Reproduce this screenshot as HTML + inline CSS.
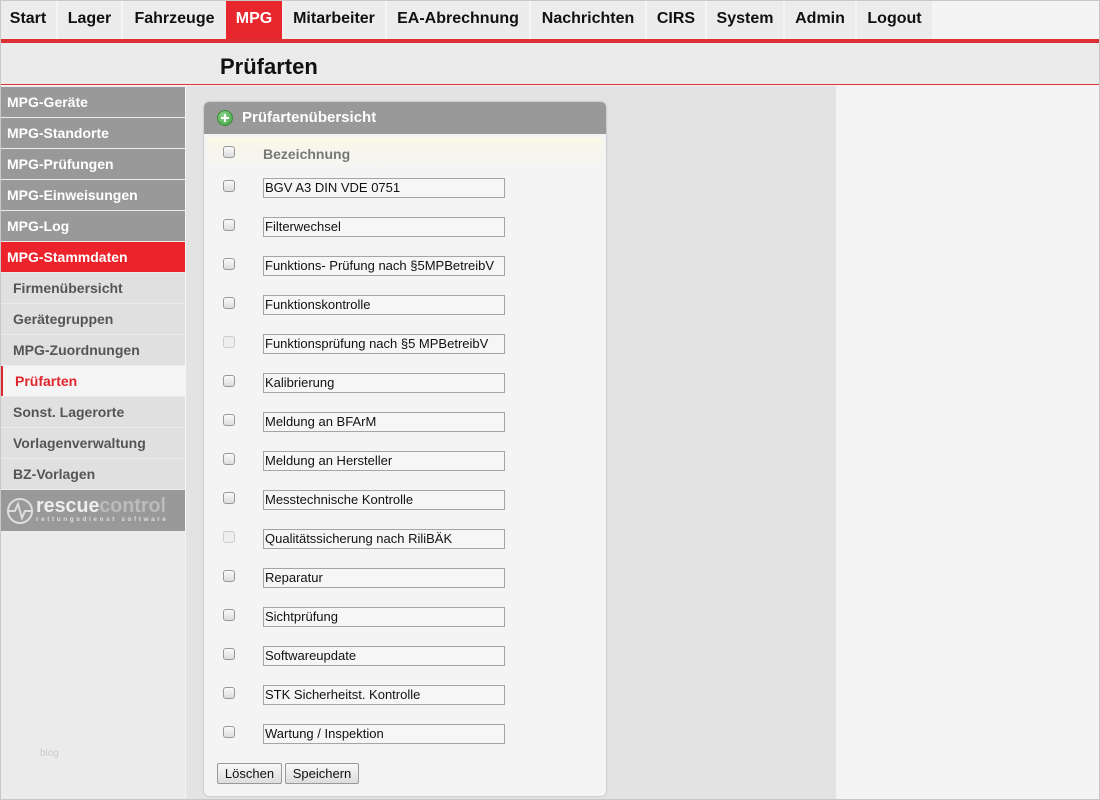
<!DOCTYPE html>
<html><head><meta charset="utf-8"><style>
*{box-sizing:border-box;margin:0;padding:0}
body{width:1100px;height:800px;position:relative;background:#f4f4f4;font-family:"Liberation Sans",Arial,sans-serif;overflow:hidden}
.frame{position:absolute;left:0;top:0;width:1100px;height:800px;border:1px solid #c8c8c8;pointer-events:none;z-index:10}
.nav{position:absolute;left:0;top:0;height:39px;width:1100px;background:#f4f4f4}
.nav a{position:absolute;top:0;height:39px;line-height:38px;background:#ececec;color:#111;font-weight:bold;font-size:16px;text-align:center;text-decoration:none}
.nav a.on{background:#e8262d;color:#fff}
.redbar{position:absolute;left:0;top:39px;width:1100px;height:4px;background:#dd3035}
.title{position:absolute;left:0;top:43px;width:1100px;height:42px;background:#ebebeb;border-bottom:1px solid #d9363b}
.title h1{position:absolute;left:220px;top:11px;font-size:22px;font-weight:bold;color:#111}
.side{position:absolute;left:0;top:86px;width:185px;height:714px;background:#ebebeb}
.si{position:absolute;left:0;width:185px;height:30px;line-height:30px;font-size:14px;font-weight:bold;padding-left:7px}
.g{background:#999;color:#fff}
.r{background:#ec232b;color:#fff}
.s{background:#e0e0e0;color:#555;padding-left:13px}
.a{background:#f5f5f5;color:#e0262d;padding-left:12px;border-left:3px solid #e0262d}
.content{position:absolute;left:186px;top:86px;width:650px;height:714px;background:#e3e3e3}
.panel{position:absolute;left:204px;top:102px;width:402px;height:694px;background:#f4f4f4;border-radius:5px;box-shadow:0 0 2px #aaa;overflow:hidden}
.ph{height:32px;background:#999;color:#fff;font-weight:bold;font-size:15px;line-height:32px;padding-left:38px;position:relative}
.plus{position:absolute;left:13px;top:8px;width:16px;height:16px;border-radius:50%;background:radial-gradient(circle at 40% 35%,#8fd98f,#3c9a3c);border:1px solid #3b8a3b}
.plus:before{content:"";position:absolute;left:3px;top:6px;width:8px;height:2px;background:#fff}
.plus:after{content:"";position:absolute;left:6px;top:3px;width:2px;height:8px;background:#fff}
.hr{position:absolute;left:3px;top:36px;width:396px;height:30px;background:linear-gradient(#faf8e6,#f4f4f4)}
.hr b{position:absolute;left:56px;top:8px;font-size:14px;color:#777}
.cb{position:absolute;left:19px;width:12px;height:12px;border:1px solid #999;border-radius:3px;background:linear-gradient(#fafafa,#ddd)}
.cb.d{border-color:#ccc;background:#eee}
.in{position:absolute;left:59px;width:242px;height:20px;border:1px solid #a5a5a5;background:#f6f6f6;font-size:13px;line-height:18px;padding-left:1px;color:#111;white-space:nowrap;overflow:hidden}
.btn{position:absolute;top:661px;height:21px;border:1px solid #999;border-radius:2px;background:linear-gradient(#f8f8f8,#ddd);font-size:13px;line-height:19px;text-align:center;color:#111}
.logo{position:absolute;left:0;top:490px;width:185px;height:41px;background:#999}
</style></head><body>
<div class="nav">
<a style="left:0;width:56px">Start</a>
<a style="left:58px;width:63px">Lager</a>
<a style="left:123px;width:103px">Fahrzeuge</a>
<a class="on" style="left:226px;width:56px">MPG</a>
<a style="left:283px;width:102px">Mitarbeiter</a>
<a style="left:387px;width:142px">EA-Abrechnung</a>
<a style="left:531px;width:114px">Nachrichten</a>
<a style="left:647px;width:58px">CIRS</a>
<a style="left:707px;width:76px">System</a>
<a style="left:785px;width:70px">Admin</a>
<a style="left:857px;width:75px">Logout</a>
</div>
<div class="redbar"></div>
<div class="title"><h1>Prüfarten</h1></div>
<div class="side">
<div class="si g" style="top:1px">MPG-Geräte</div>
<div class="si g" style="top:32px">MPG-Standorte</div>
<div class="si g" style="top:63px">MPG-Prüfungen</div>
<div class="si g" style="top:94px">MPG-Einweisungen</div>
<div class="si g" style="top:125px">MPG-Log</div>
<div class="si r" style="top:156px">MPG-Stammdaten</div>
<div class="si s" style="top:187px">Firmenübersicht</div>
<div class="si s" style="top:218px">Gerätegruppen</div>
<div class="si s" style="top:249px">MPG-Zuordnungen</div>
<div class="si a" style="top:280px">Prüfarten</div>
<div class="si s" style="top:311px">Sonst. Lagerorte</div>
<div class="si s" style="top:342px">Vorlagenverwaltung</div>
<div class="si s" style="top:373px">BZ-Vorlagen</div>
<div style="position:absolute;left:40px;top:662px;font-size:10px;color:#ccc">blog</div>
</div>
<div class="logo">
<svg width="185" height="41"><circle cx="20" cy="21" r="12" fill="none" stroke="#ddd" stroke-width="2"/><path d="M8 21h7l3-7 4 14 3-7h7" fill="none" stroke="#ddd" stroke-width="2"/>
<text x="36" y="22" font-family="Liberation Sans" font-weight="bold" font-size="20" textLength="130" lengthAdjust="spacingAndGlyphs" fill="#eee">rescue<tspan fill="#bbb">control</tspan></text>
<text x="36" y="31" font-family="Liberation Sans" font-weight="bold" font-size="6.5" textLength="130" fill="#ddd">rettungsdienst software</text></svg>
</div>
<div class="content"></div>
<div class="panel">
<div class="ph"><span class="plus"></span>Prüfartenübersicht</div>
<div class="hr"><span class="cb" style="top:8px;left:16px"></span><b>Bezeichnung</b></div>
<span class="cb" style="top:78px"></span><div class="in" style="top:76px">BGV A3 DIN VDE 0751</div>
<span class="cb" style="top:117px"></span><div class="in" style="top:115px">Filterwechsel</div>
<span class="cb" style="top:156px"></span><div class="in" style="top:154px">Funktions- Prüfung nach §5MPBetreibV</div>
<span class="cb" style="top:195px"></span><div class="in" style="top:193px">Funktionskontrolle</div>
<span class="cb d" style="top:234px"></span><div class="in" style="top:232px">Funktionsprüfung nach §5 MPBetreibV</div>
<span class="cb" style="top:273px"></span><div class="in" style="top:271px">Kalibrierung</div>
<span class="cb" style="top:312px"></span><div class="in" style="top:310px">Meldung an BFArM</div>
<span class="cb" style="top:351px"></span><div class="in" style="top:349px">Meldung an Hersteller</div>
<span class="cb" style="top:390px"></span><div class="in" style="top:388px">Messtechnische Kontrolle</div>
<span class="cb d" style="top:429px"></span><div class="in" style="top:427px">Qualitätssicherung nach RiliBÄK</div>
<span class="cb" style="top:468px"></span><div class="in" style="top:466px">Reparatur</div>
<span class="cb" style="top:507px"></span><div class="in" style="top:505px">Sichtprüfung</div>
<span class="cb" style="top:546px"></span><div class="in" style="top:544px">Softwareupdate</div>
<span class="cb" style="top:585px"></span><div class="in" style="top:583px">STK Sicherheitst. Kontrolle</div>
<span class="cb" style="top:624px"></span><div class="in" style="top:622px">Wartung / Inspektion</div>
<div class="btn" style="left:13px;width:65px">Löschen</div>
<div class="btn" style="left:81px;width:74px">Speichern</div>
</div>
<div class="frame"></div>
</body></html>
